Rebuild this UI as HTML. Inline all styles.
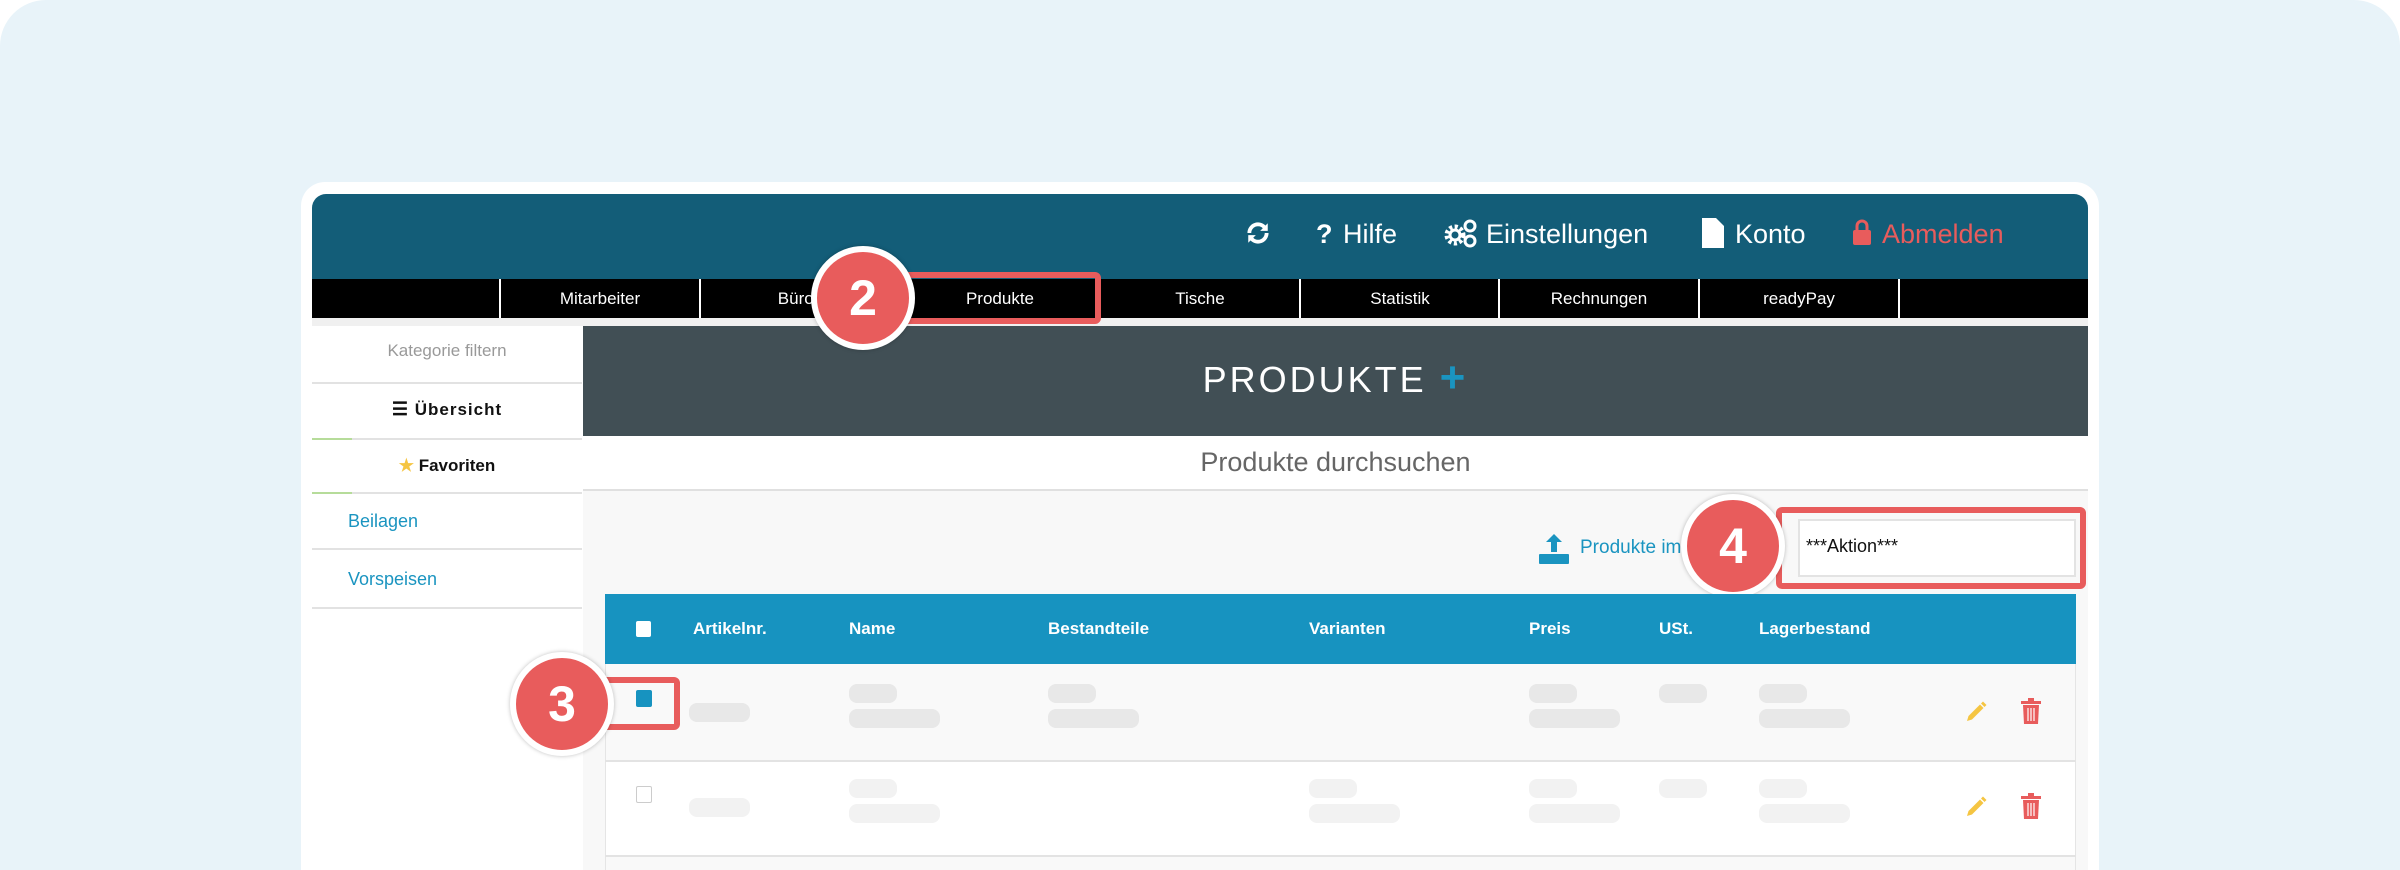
<!DOCTYPE html>
<html><head><meta charset="utf-8"><style>
*{margin:0;padding:0;box-sizing:border-box}
html,body{width:2400px;height:870px;overflow:hidden;background:#fff}
body{font-family:"Liberation Sans",sans-serif}
#w{position:relative;width:2400px;height:870px;overflow:hidden;background:#e8f3f9;border-radius:46px 46px 0 0}
.a{position:absolute}
.card{left:301px;top:182px;width:1798px;height:688px;background:#fff;border-radius:24px 24px 0 0}
.hdr{left:312px;top:194px;width:1776px;height:85px;background:#135d78;border-radius:14px 14px 0 0}
.nav{left:312px;top:279px;width:1776px;height:39px;background:#000}
.sep{top:279px;width:2px;height:39px;background:#fff}
.nt{top:279px;height:39px;line-height:39px;color:#fff;font-size:17px;text-align:center;width:200px}
.ht{color:#fff;font-size:27px;top:216px;line-height:36px}
.gap{left:312px;top:318px;width:1776px;height:8px;background:#f0f0f0}
.side{left:312px;top:326px;width:270px;height:544px;background:#fff}
.si{left:312px;width:270px;text-align:center;font-size:17px}
.sl{left:312px;width:270px;height:2px;background:#e2e2e2}
.main{left:583px;top:326px;width:1505px;height:544px;background:#f8f8f8}
.dark{left:583px;top:326px;width:1505px;height:110px;background:#414f55}
.ph{background:#e8e8e8;border-radius:8px;height:19px}
.th{top:594px;height:70px;line-height:70px;color:#fff;font-weight:bold;font-size:17px}
.circ{width:104px;height:104px;border-radius:50%;background:#e85c5c;border:6px solid #fff;color:#fff;font-weight:bold;font-size:50px;text-align:center;line-height:92px;box-shadow:0 0 4px rgba(0,0,0,.25)}
.rr{border:6px solid #e85c5c;border-radius:6px}
</style></head><body><div id="w">
<div class="a card"></div>
<div class="a hdr"></div>
<div class="a nav"></div>
<div class="a sep" style="left:499px"></div><div class="a sep" style="left:699px"></div><div class="a sep" style="left:899px"></div><div class="a sep" style="left:1099px"></div><div class="a sep" style="left:1299px"></div><div class="a sep" style="left:1498px"></div><div class="a sep" style="left:1698px"></div><div class="a sep" style="left:1898px"></div>
<div class="a nt" style="left:500px">Mitarbeiter</div>
<div class="a nt" style="left:700px">Büros</div>
<div class="a nt" style="left:900px">Produkte</div>
<div class="a nt" style="left:1100px">Tische</div>
<div class="a nt" style="left:1300px">Statistik</div>
<div class="a nt" style="left:1499px">Rechnungen</div>
<div class="a nt" style="left:1699px">readyPay</div>
<svg class="a" style="left:1245px;top:220px" width="26" height="26" viewBox="0 0 24 24"><path d="M20 12a8 8 0 0 1-14 5.3M4 12a8 8 0 0 1 14-5.3" fill="none" stroke="#fff" stroke-width="3.5"/><path d="M21 3v7h-7zM3 21v-7h7z" fill="#fff"/></svg>
<div class="a ht" style="left:1316px;font-weight:bold">?</div>
<div class="a ht" style="left:1343px">Hilfe</div>
<svg class="a" style="left:1444px;top:218px" width="34" height="30" viewBox="0 0 34 30"><circle cx="11" cy="17" r="8" fill="none" stroke="#fff" stroke-width="5" stroke-dasharray="3 2.3"/><circle cx="11" cy="17" r="5" fill="none" stroke="#fff" stroke-width="3"/><circle cx="26" cy="8" r="5" fill="none" stroke="#fff" stroke-width="3"/><circle cx="26" cy="23" r="5" fill="none" stroke="#fff" stroke-width="3"/></svg>
<div class="a ht" style="left:1486px">Einstellungen</div>
<svg class="a" style="left:1702px;top:218px" width="22" height="30" viewBox="0 0 22 30"><path d="M0 0h14l8 8v22H0z" fill="#fff"/></svg>
<div class="a ht" style="left:1735px">Konto</div>
<svg class="a" style="left:1852px;top:219px" width="20" height="26" viewBox="0 0 20 26"><path d="M5 11V7a5 5 0 0 1 10 0v4" fill="none" stroke="#e85c5c" stroke-width="3"/><rect x="1" y="11" width="18" height="15" rx="2" fill="#e85c5c"/></svg>
<div class="a ht" style="left:1882px;color:#e85c5c">Abmelden</div>
<div class="a gap"></div>
<div class="a side"></div>
<div class="a main"></div>
<div class="a si" style="top:341px;color:#999">Kategorie filtern</div>
<div class="a sl" style="top:382px"></div>
<div class="a si" style="top:399px;font-weight:bold;letter-spacing:1px;color:#111"><span style="font-size:18px">☰</span> Übersicht</div>
<div class="a sl" style="top:438px"></div><div class="a" style="left:312px;top:438px;width:40px;height:2px;background:#b6dc9a"></div>
<div class="a si" style="top:456px;font-weight:bold;color:#111"><span style="color:#f5c542">★</span> Favoriten</div>
<div class="a sl" style="top:492px"></div><div class="a" style="left:312px;top:492px;width:40px;height:2px;background:#b6dc9a"></div>
<div class="a" style="left:348px;top:511px;color:#1a94c0;font-size:18px">Beilagen</div>
<div class="a sl" style="top:548px"></div>
<div class="a" style="left:348px;top:569px;color:#1a94c0;font-size:18px">Vorspeisen</div>
<div class="a sl" style="top:607px"></div>
<div class="a dark"></div>
<div class="a" style="left:583px;top:359px;width:1505px;text-align:center;color:#fff;font-size:36px;letter-spacing:3px">PRODUKTE <span style="color:#1a94c0;font-weight:bold;font-size:44px;line-height:30px">+</span></div>
<div class="a" style="left:583px;top:436px;width:1505px;height:54px;background:#fff"></div>
<div class="a" style="left:583px;top:447px;width:1505px;text-align:center;color:#666;font-size:27px">Produkte durchsuchen</div>
<div class="a" style="left:583px;top:489px;width:1505px;height:2px;background:#e0e0e0"></div>
<svg class="a" style="left:1538px;top:532px" width="32" height="32" viewBox="0 0 32 32"><path d="M16 2l8 8h-5v10h-6V10H8z" fill="#1a94c0"/><rect x="1" y="22" width="30" height="10" rx="1" fill="#1a94c0"/></svg>
<div class="a" style="left:1580px;top:537px;color:#1a94c0;font-size:19px">Produkte im</div>
<div class="a" style="left:1798px;top:519px;width:278px;height:58px;background:#fff;border:2px solid #e3e3e3"></div>
<div class="a" style="left:1806px;top:536px;font-size:18px;color:#111">***Aktion***</div>
<div class="a rr" style="left:1776px;top:507px;width:310px;height:82px"></div>
<div class="a circ" style="left:1681px;top:494px">4</div>
<div class="a" style="left:605px;top:594px;width:1471px;height:70px;background:#1793c0"></div>
<div class="a" style="left:636px;top:621px;width:15px;height:16px;background:#fff;border-radius:2px"></div>
<div class="a th" style="left:693px">Artikelnr.</div>
<div class="a th" style="left:849px">Name</div>
<div class="a th" style="left:1048px">Bestandteile</div>
<div class="a th" style="left:1309px">Varianten</div>
<div class="a th" style="left:1529px">Preis</div>
<div class="a th" style="left:1659px">USt.</div>
<div class="a th" style="left:1759px">Lagerbestand</div>
<div class="a" style="left:605px;top:664px;width:1471px;height:97px;background:#f9f9f9;border-left:1px solid #e5e5e5;border-right:1px solid #e5e5e5"></div>
<div class="a" style="left:605px;top:760px;width:1471px;height:2px;background:#e3e3e3"></div>
<div class="a" style="left:605px;top:762px;width:1471px;height:94px;background:#fff;border-left:1px solid #e5e5e5;border-right:1px solid #e5e5e5"></div>
<div class="a" style="left:605px;top:855px;width:1471px;height:2px;background:#e3e3e3"></div>
<div class="a" style="left:605px;top:857px;width:1471px;height:13px;background:#f9f9f9;border-left:1px solid #e5e5e5;border-right:1px solid #e5e5e5"></div>
<div class="a" style="left:636px;top:690px;width:16px;height:17px;background:#1793c0;border-radius:2px"></div>
<div class="a ph" style="left:689px;top:703px;width:61px"></div>
<div class="a ph" style="left:849px;top:684px;width:48px"></div><div class="a ph" style="left:849px;top:709px;width:91px"></div>
<div class="a ph" style="left:1048px;top:684px;width:48px"></div><div class="a ph" style="left:1048px;top:709px;width:91px"></div>
<div class="a ph" style="left:1529px;top:684px;width:48px"></div><div class="a ph" style="left:1529px;top:709px;width:91px"></div>
<div class="a ph" style="left:1659px;top:684px;width:48px"></div>
<div class="a ph" style="left:1759px;top:684px;width:48px"></div><div class="a ph" style="left:1759px;top:709px;width:91px"></div>
<div class="a" style="left:636px;top:786px;width:16px;height:17px;background:#fff;border:1px solid #ccc;border-radius:2px"></div>
<div class="a ph" style="left:689px;top:798px;width:61px;background:#f2f2f2"></div>
<div class="a ph" style="left:849px;top:779px;width:48px;background:#f2f2f2"></div><div class="a ph" style="left:849px;top:804px;width:91px;background:#f2f2f2"></div>
<div class="a ph" style="left:1309px;top:779px;width:48px;background:#f2f2f2"></div><div class="a ph" style="left:1309px;top:804px;width:91px;background:#f2f2f2"></div>
<div class="a ph" style="left:1529px;top:779px;width:48px;background:#f2f2f2"></div><div class="a ph" style="left:1529px;top:804px;width:91px;background:#f2f2f2"></div>
<div class="a ph" style="left:1659px;top:779px;width:48px;background:#f2f2f2"></div>
<div class="a ph" style="left:1759px;top:779px;width:48px;background:#f2f2f2"></div><div class="a ph" style="left:1759px;top:804px;width:91px;background:#f2f2f2"></div>
<svg class="a" style="left:1964px;top:700px" width="24" height="24" viewBox="0 0 24 24"><path d="M3 21l1.5-5L16 4.5l3.5 3.5L8 19.5z" fill="#f5c542"/><path d="M17 3.5l2-2 3.5 3.5-2 2z" fill="#f5c542"/></svg>
<svg class="a" style="left:2021px;top:698px" width="20" height="26" viewBox="0 0 20 26"><rect x="0" y="3" width="20" height="3" fill="#e85c5c"/><rect x="7" y="0" width="6" height="3" fill="#e85c5c"/><path d="M2 7h16l-1 19H3z" fill="#e85c5c"/><path d="M7 10v13M10 10v13M13 10v13" stroke="#fff" stroke-width="1.2"/></svg>
<svg class="a" style="left:1964px;top:795px" width="24" height="24" viewBox="0 0 24 24"><path d="M3 21l1.5-5L16 4.5l3.5 3.5L8 19.5z" fill="#f5c542"/><path d="M17 3.5l2-2 3.5 3.5-2 2z" fill="#f5c542"/></svg>
<svg class="a" style="left:2021px;top:793px" width="20" height="26" viewBox="0 0 20 26"><rect x="0" y="3" width="20" height="3" fill="#e85c5c"/><rect x="7" y="0" width="6" height="3" fill="#e85c5c"/><path d="M2 7h16l-1 19H3z" fill="#e85c5c"/><path d="M7 10v13M10 10v13M13 10v13" stroke="#fff" stroke-width="1.2"/></svg>
<div class="a rr" style="left:596px;top:677px;width:84px;height:53px"></div>
<div class="a circ" style="left:510px;top:652px">3</div>
<div class="a rr" style="left:880px;top:272px;width:221px;height:52px"></div>
<div class="a circ" style="left:811px;top:246px">2</div>
</div></body></html>
